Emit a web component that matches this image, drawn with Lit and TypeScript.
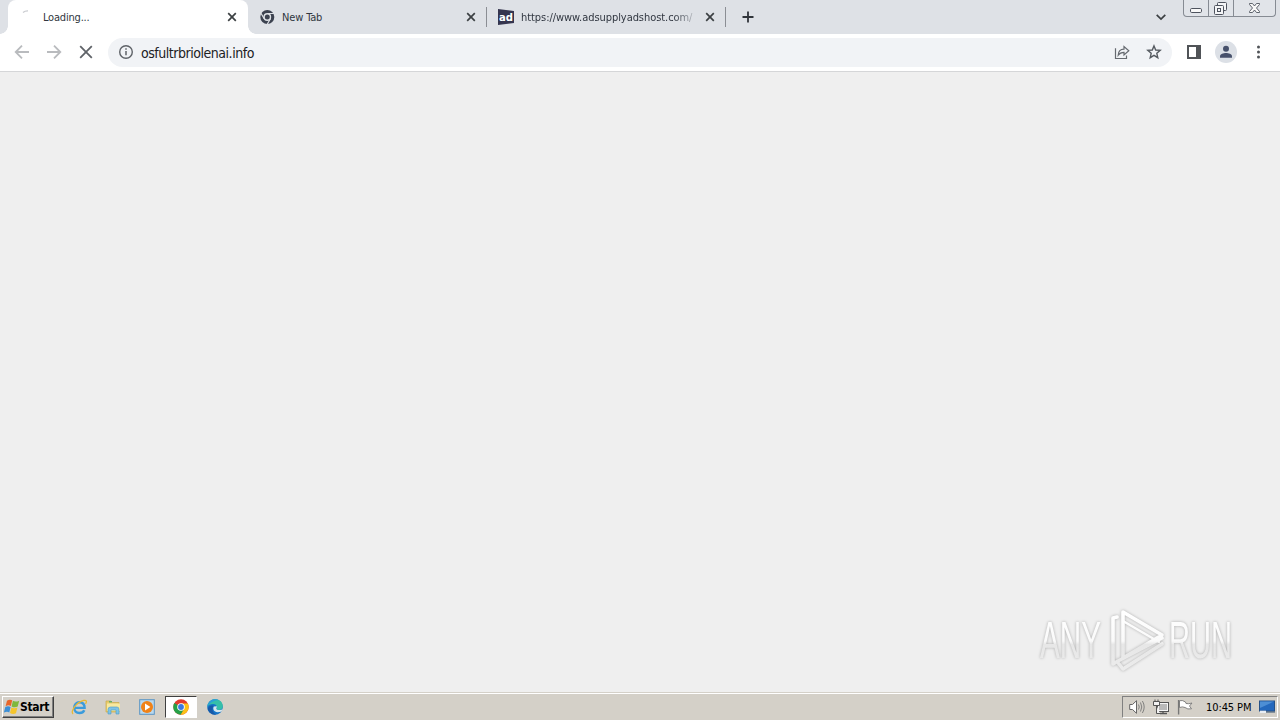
import { LitElement, html, css, svg } from 'lit';
import { customElement, property } from 'lit/decorators.js';

const closeIcon = html`
  <svg class="close" width="10" height="10" viewBox="0 0 10 10">
    <path d="M1.2 1.2L8.8 8.8M8.8 1.2L1.2 8.8" stroke="#3c4043" stroke-width="1.7" fill="none" />
  </svg>`;

@customElement('browser-tabs')
class BrowserTabs extends LitElement {
  static styles = css`
    :host {
      display: block;
      height: 34px;
      background: #dee1e6;
      font: 11px 'DejaVu Sans Condensed', Tahoma, sans-serif;
      color: #303640;
    }
    .strip {
      display: flex;
      height: 34px;
      padding-left: 8px;
    }
    .tab {
      display: flex;
      align-items: center;
      box-sizing: border-box;
      width: 238px;
      height: 34px;
      padding: 0 10px 0 12px;
    }
    .tab.site {
      padding-left: 11px;
    }
    .tab.active {
      width: 240px;
      padding-left: 11px;
      padding-right: 11px;
      background: #fff;
      border-radius: 8px 8px 0 0;
      position: relative;
    }
    /* curved feet of the active tab */
    .tab.active::before,
    .tab.active::after {
      content: '';
      position: absolute;
      bottom: 0;
      width: 8px;
      height: 8px;
    }
    .tab.active::before {
      left: -8px;
      background: radial-gradient(circle at 0 0, transparent 7.5px, #fff 8px);
    }
    .tab.active::after {
      right: -8px;
      background: radial-gradient(circle at 100% 0, transparent 7.5px, #fff 8px);
    }
    .icon {
      width: 16px;
      height: 16px;
      margin-right: 6px;
      flex: none;
    }
    .active .icon {
      margin-right: 8px;
    }
    .site .icon {
      margin-right: 7px;
    }
    .title {
      flex: 1;
      overflow: hidden;
      white-space: nowrap;
      margin-right: 11px;
      padding-top: 1px;
      line-height: 16px;
    }
    .loading {
      letter-spacing: -0.2px;
    }
    .newtab {
      letter-spacing: -0.15px;
    }
    .url {
      letter-spacing: -0.06px;
      mask-image: linear-gradient(to right, #000 88%, transparent 103%);
    }
    .close {
      flex: none;
    }
    .divider {
      width: 1px;
      height: 20px;
      margin-top: 7px;
      background: #8b8e94;
      flex: none;
    }
    .new {
      width: 14px;
      height: 14px;
      margin: 10px 0 0 15px;
    }
    .chevron {
      margin: 12px 16px 0 auto;
    }
    .window-buttons {
      display: flex;
      box-sizing: border-box;
      width: 93px;
      height: 17px;
      margin-right: 4px;
      border: 1px solid #868b93;
      border-top: 0;
      border-radius: 0 0 4px 4px;
      background: #e1e4e9;
    }
    .window-buttons svg {
      display: block;
      height: 16px;
    }
    .window-buttons svg + svg {
      border-left: 1px solid #868b93;
    }
  `;

  render() {
    return html`
      <div class="strip">
        <div class="tab active">
          <svg class="icon" viewBox="0 0 16 16">
            <path d="M4 3.4Q6 1.7 9 1.8" fill="none" stroke="#c9cbd0" stroke-width="1.3" />
          </svg>
          <span class="title loading">Loading...</span>
          ${closeIcon}
        </div>
        <div class="tab">
          <svg class="icon" viewBox="0 0 16 16">
            <circle cx="7.3" cy="8" r="7" fill="#3c4250" />
            <circle cx="7.3" cy="8" r="3.2" fill="#3c4250" stroke="#dee1e6" stroke-width="1.4" />
            <path d="M7.3 4.5H14M4.2 9.7L1 4.2M10.4 9.8L7.2 15.2" stroke="#dee1e6" stroke-width="1.2" />
          </svg>
          <span class="title newtab">New Tab</span>
          ${closeIcon}
        </div>
        <div class="divider"></div>
        <div class="tab site">
          <svg class="icon" viewBox="0 0 16 16">
            <path d="M0 0L16 2V14L0 16Z" fill="#35354f" />
            <text x="1" y="12" font-family="DejaVu Sans" font-size="11" font-weight="bold" fill="#fff" textLength="14" lengthAdjust="spacingAndGlyphs">ad</text>
          </svg>
          <span class="title url">https://www.adsupplyadshost.com/</span>
          ${closeIcon}
        </div>
        <div class="divider"></div>
        <svg class="new" viewBox="0 0 14 14">
          <path d="M7 1.5V12.5M1.5 7H12.5" stroke="#30343a" stroke-width="1.8" />
        </svg>
        <svg class="chevron" width="12" height="10" viewBox="0 0 12 10">
          <path d="M1.7 2.8L6 7L10.3 2.8" fill="none" stroke="#3c4043" stroke-width="1.7" />
        </svg>
        <div class="window-buttons">
          <svg width="24" viewBox="0 0 24 16">
            <rect x="6.5" y="8.5" width="11" height="4" rx="1.2" fill="#f8f8f8" stroke="#4e535e" />
          </svg>
          <svg width="24" viewBox="0 0 24 16">
            <g fill="#f4f5f7" stroke="#4e535e">
              <rect x="8.5" y="2.5" width="9" height="8" rx="1" />
              <rect x="5.5" y="5.5" width="9" height="9" rx="1" />
              <rect x="8.5" y="8.5" width="3" height="3" />
            </g>
          </svg>
          <svg width="41" viewBox="0 0 41 16">
            <path d="M15.5 3.5H18.5L20.5 6L22.5 3.5H25.5V4.5L22.5 8L25.5 11.5V12.5H22.5L20.5 10L18.5 12.5H15.5V11.5L18.5 8L15.5 4.5Z" fill="#f8f8f8" stroke="#4e535e" stroke-width=".9" />
          </svg>
        </div>
      </div>
    `;
  }
}

@customElement('browser-toolbar')
class BrowserToolbar extends LitElement {
  @property({ type: String }) url = '';

  static styles = css`
    :host {
      display: block;
      height: 37px;
      background: #fff;
      border-bottom: 1px solid #d5d6d8;
    }
    .bar {
      display: flex;
      align-items: center;
      height: 36px;
      padding-left: 14px;
    }
    svg {
      display: block;
      flex: none;
      width: 16px;
      height: 16px;
    }
    .nav {
      display: flex;
      gap: 16px;
      margin-right: 14px;
    }
    .omnibox {
      display: flex;
      align-items: center;
      box-sizing: border-box;
      width: 1064px;
      height: 29px;
      padding: 0 10px;
      border-radius: 15px;
      background: #f1f3f6;
    }
    .address {
      flex: 1;
      margin-left: 7px;
      padding-top: 1px;
      color: #202124;
      font: 14px/20px 'DejaVu Sans Condensed', Tahoma, sans-serif;
      letter-spacing: -0.47px;
    }
    .omnibox .star {
      margin-left: 16px;
    }
    .panel {
      margin: 0 13px 0 14px;
    }
    .avatar {
      width: 22px;
      height: 22px;
    }
    .menu {
      margin-left: 13px;
    }
  `;

  render() {
    return html`
      <div class="bar">
        <div class="nav">
          <svg viewBox="0 0 16 16"><path d="M15 8H2M8 1.7L1.7 8L8 14.3" fill="none" stroke="#b9bbbe" stroke-width="1.8" /></svg>
          <svg viewBox="0 0 16 16"><path d="M1 8H14M8 1.7L14.3 8L8 14.3" fill="none" stroke="#b9bbbe" stroke-width="1.8" /></svg>
          <svg viewBox="0 0 16 16"><path d="M2.2 2.2L13.8 13.8M13.8 2.2L2.2 13.8" stroke="#5f6368" stroke-width="1.8" /></svg>
        </div>
        <div class="omnibox">
          <svg viewBox="0 0 16 16">
            <circle cx="8" cy="8" r="6.3" fill="none" stroke="#5f6368" stroke-width="1.4" />
            <path d="M8 7V11.3M8 4.3V5.8" stroke="#5f6368" stroke-width="1.5" />
          </svg>
          <span class="address">${this.url}</span>
          <svg viewBox="0 0 16 16">
            <path d="M1.5 4.3V14.5H12.5V11.5M4.2 11.2C4.4 7.4 6.5 5.2 10 5.2V2.5L14.8 6.8L10 11V8.4C7.3 8.4 5.6 9.2 4.2 11.2Z" fill="none" stroke="#666a70" stroke-width="1.2" />
          </svg>
          <svg class="star" viewBox="0 0 16 16">
            <path d="M8 1.9L9.7 6L14.2 6.4L10.8 9.3L11.8 13.7L8 11.4L4.2 13.7L5.2 9.3L1.8 6.4L6.3 6Z" fill="none" stroke="#555a60" stroke-width="1.4" />
          </svg>
        </div>
        <svg class="panel" viewBox="0 0 16 16">
          <path d="M1 1H15V15H1ZM3 3V13H10V3Z" fill="#505357" fill-rule="evenodd" />
        </svg>
        <svg class="avatar" viewBox="0 0 22 22">
          <circle cx="11" cy="11" r="11" fill="#dce0e6" />
          <circle cx="11" cy="7.8" r="3" fill="#47516b" />
          <path d="M5 16.8V15.3C5 13 8.5 12 11 12S17 13 17 15.3V16.8Z" fill="#47516b" />
        </svg>
        <svg class="menu" viewBox="0 0 16 16">
          <g fill="#505357"><circle cx="8.5" cy="3" r="1.5" /><circle cx="8.5" cy="8" r="1.5" /><circle cx="8.5" cy="13" r="1.5" /></g>
        </svg>
      </div>
    `;
  }
}

@customElement('task-bar')
class TaskBar extends LitElement {
  @property({ type: String }) time = '';

  static styles = css`
    :host {
      display: block;
      box-sizing: border-box;
      height: 28px;
      border-top: 1px solid #d4d0c8;
      background: #d4d0c8;
      font: 11px 'DejaVu Sans Condensed', Tahoma, sans-serif;
      color: #000;
    }
    .bar {
      display: flex;
      box-sizing: border-box;
      height: 27px;
      border-top: 1px solid #fff;
      padding: 2px;
    }
    svg {
      display: block;
      flex: none;
    }
    .start {
      display: flex;
      align-items: center;
      box-sizing: border-box;
      width: 52px;
      height: 22px;
      padding-left: 1px;
      border: 1px solid;
      border-color: #fff #404040 #404040 #fff;
      box-shadow: inset -1px -1px #808080;
      font-weight: bold;
      font-size: 12px;
      letter-spacing: -0.3px;
    }
    .apps {
      display: flex;
      margin-left: 9px;
      gap: 2px;
    }
    .app {
      display: flex;
      align-items: center;
      justify-content: center;
      box-sizing: border-box;
      width: 32px;
      height: 22px;
    }
    .app.open {
      border: 1px solid;
      border-color: #404040 #fff #fff #404040;
      background: #fff;
    }
    .tray {
      display: flex;
      align-items: center;
      box-sizing: border-box;
      width: 156px;
      height: 22px;
      margin-left: auto;
      padding-left: 6px;
      border: 1px solid;
      border-color: #808080 #fff #fff #808080;
    }
    .icons {
      display: flex;
      gap: 8px;
    }
    .clock {
      margin: 0 7px 0 13px;
      width: 46px;
      white-space: nowrap;
      letter-spacing: -0.1px;
    }
  `;

  _ie() {
    return svg`
      <path d="M3.5 8.9H13.6C13.6 4.8 11.3 3.2 8.4 3.2S3.2 5.5 3.2 8.7S5.4 14 8.4 14C10.8 14 12.6 12.8 13.3 11.2" fill="none" stroke="#3a9bdc" stroke-width="2.4" />
      <path d="M2.2 14.8C-1 13.5 4.5 3.5 12.8 1.4C16 .8 15.8 3 14.5 4.8" fill="none" stroke="#e8b833" stroke-width="1.3" />`;
  }

  _explorer() {
    return svg`
      <path d="M1 2H6L7.5 3.5H14V13H1Z" fill="#e8cc6c" stroke="#c9a94b" stroke-width=".7" />
      <path d="M2 4.5H15V12H2Z" fill="#f7e9a0" />
      <path d="M4 2.8H7" stroke="#55a868" stroke-width="1.3" />
      <path d="M3 15V10.5Q3 8 5.5 8H12Q14 8 14 10.5V15H11V11H6V15Z" fill="#7ec3e6" stroke="#4b9ac6" stroke-width=".6" />`;
  }

  _player() {
    return svg`
      <rect x=".7" y=".7" width="14.6" height="14.6" fill="#b9d9ef" stroke="#5a94c4" />
      <circle cx="8" cy="8" r="6" fill="#f08218" />
      <path d="M6 4.5L11.4 8L6 11.5Z" fill="#fff" />`;
  }

  _chrome() {
    return svg`
      <circle cx="8" cy="8" r="7.7" fill="#e33b2e" />
      <path d="M8 8L1.3 4.1A7.7 7.7 0 0 0 7.7 15.7L11.4 10Z" fill="#26a148" />
      <path d="M8 4.4H14.8A7.7 7.7 0 0 1 7.7 15.7L11.2 9.8Z" fill="#fbc116" />
      <circle cx="8" cy="8" r="3.8" fill="#fff" />
      <circle cx="8" cy="8" r="2.9" fill="#3b78e0" />`;
  }

  _edge() {
    return svg`
      <circle cx="8" cy="8" r="7.8" fill="#1473c8" />
      <path d="M.3 7.6C1 2.8 4.5 .2 8 .2C12.8 .2 15.8 3.4 15.8 7C15.8 9.6 14 11 11.8 11C9.6 11 9 10 9.8 8.8C10.2 6.5 8.5 5 6 5C3.5 5 1.4 6 .3 7.6Z" fill="#35bfa9" />
      <path d="M.3 7.6C1 2.8 4.5 .2 8 .2C9.5 .2 11 .6 12 1.3C7.5 1 3 3.5 .3 7.6Z" fill="#2a9fd8" />
      <path d="M6.8 7.5C5.4 9.8 7 13 10.5 13.2C12.3 13.3 13.8 12.8 14.8 12L15.8 10C13.8 11.5 9.6 11.6 9.3 9.4C9.3 8.6 10.2 8.7 9.8 7.2Z" fill="#d4e6ee" />
      <path d="M6.6 6.8C4.5 9 5.3 14 9.4 15.6C5 16.4 1.2 13 .7 9.8C2 6.8 4.2 6 6.6 6.8Z" fill="#1759a8" />`;
  }

  render() {
    const apps = [
      { icon: this._ie(), open: false },
      { icon: this._explorer(), open: false },
      { icon: this._player(), open: false },
      { icon: this._chrome(), open: true },
      { icon: this._edge(), open: false },
    ];

    return html`
      <div class="bar">
        <div class="start">
          <svg width="16" height="16" viewBox="0 0 16 16">
            <path d="M3 1.7Q5.7 -.2 8.2 1.3L6.9 7Q4.4 5.6 1.6 7.2Z" fill="#e8662a" />
            <path d="M8.9 1.8Q11.6 3.4 15.2 1.7L13.7 7.6Q10.6 9 7.6 7.4Z" fill="#7fb83c" />
            <path d="M1.3 8.1Q4 6.5 6.6 8L5.3 13.4Q2.8 12 -.2 13.7Z" fill="#3c8fd6" />
            <path d="M7.4 8.4Q10.2 10 13.4 8.5L12 14.2Q9 15.9 6 14Z" fill="#f5c52c" />
          </svg>
          <span>Start</span>
        </div>
        <div class="apps">
          ${apps.map(app => html`
            <div class="app ${app.open ? 'open' : ''}">
              <svg width="16" height="16" viewBox="0 0 16 16">${app.icon}</svg>
            </div>
          `)}
        </div>
        <div class="tray">
          <div class="icons">
            <svg width="16" height="16" viewBox="0 0 16 16">
              <path d="M.7 5.5H3.5L7.5 1.7V14.3L3.5 10.5H.7Z" fill="#fff" stroke="#666" />
              <path d="M9.5 5.5Q11 8 9.5 10.5M11.5 3.5Q14 8 11.5 12.5M13.4 2Q17 8 13.4 14" fill="none" stroke="#777" stroke-width=".9" />
            </svg>
            <svg width="16" height="16" viewBox="0 0 16 16">
              <rect x="4.5" y="3.5" width="11" height="9" fill="#b9b9b9" stroke="#555" />
              <rect x="5.5" y="4.5" width="9" height="7" fill="none" stroke="#f5f5f5" />
              <path d="M7 14.5H14M10 12.5V15" stroke="#555" stroke-width="1.3" />
              <path d="M.5 2.5H6.5V6.5H.5ZM2 .5V2.5M5 .5V2.5M3.5 6.5V14.5H7" fill="#f2f2f2" stroke="#555" />
            </svg>
            <svg width="16" height="16" viewBox="0 0 16 16">
              <path d="M2.5 1.7Q5.5 .8 8.5 3L9 4.5Q11.5 5.2 15 4L12.5 7L14.5 9.8Q10.5 10.7 8 8.5Q5.5 7.3 2.5 8.5Z" fill="#fff" stroke="#777" stroke-width=".9" />
              <path d="M1.6 1V15.5" stroke="#777" stroke-width="1.4" />
            </svg>
          </div>
          <span class="clock">${this.time}</span>
          <svg width="16" height="14" viewBox="0 0 16 14">
            <rect x=".5" y="1" width="15" height="10" fill="#2468bd" stroke="#245188" />
            <path d="M1 1.5H15L1 8Z" fill="#4d8ed5" />
            <path d="M1 10.7H7V13H1Z" fill="#e8edf3" />
            <path d="M7 12H16" stroke="#35506e" />
          </svg>
        </div>
      </div>
    `;
  }
}

@customElement('app-root')
class AppRoot extends LitElement {
  static styles = css`
    :host {
      display: flex;
      flex-direction: column;
      width: 1280px;
      height: 720px;
      overflow: hidden;
      background: #efefef;
    }
    .page {
      flex: 1;
      display: flex;
      align-items: flex-end;
      justify-content: flex-end;
      padding: 0 40px 14px 0;
    }
    .watermark {
      display: block;
      filter: drop-shadow(0 0 1.5px rgba(0, 0, 0, 0.28));
    }
  `;

  render() {
    return html`
      <browser-tabs></browser-tabs>
      <browser-toolbar url="osfultrbriolenai.info"></browser-toolbar>
      <main class="page">
        <svg class="watermark" width="210" height="74" viewBox="0 0 210 74">
          <defs>
            <linearGradient id="fade" gradientUnits="userSpaceOnUse" x1="0" y1="8" x2="0" y2="66">
              <stop offset="0" stop-color="#fff" />
              <stop offset=".5" stop-color="#fafafa" />
              <stop offset=".56" stop-color="#e7e7e7" />
              <stop offset="1" stop-color="#ececec" />
            </linearGradient>
          </defs>
          <g fill="url(#fade)" font-family="Liberation Sans" font-size="51">
            <text x="10" y="54" textLength="61" lengthAdjust="spacingAndGlyphs">ANY</text>
            <text x="139" y="54" textLength="63" lengthAdjust="spacingAndGlyphs">RUN</text>
          </g>
          <g fill="none" stroke="url(#fade)" stroke-width="3.6" stroke-linejoin="round" stroke-linecap="round">
            <path d="M93 54V8L132 31L93 54" />
            <path d="M93 17L129 38" stroke-width="2.4" />
            <path d="M87 13L83 14V60L88 57L132 34M89 60L93 65L132 40" />
          </g>
        </svg>
      </main>
      <task-bar time="10:45 PM"></task-bar>
    `;
  }
}
